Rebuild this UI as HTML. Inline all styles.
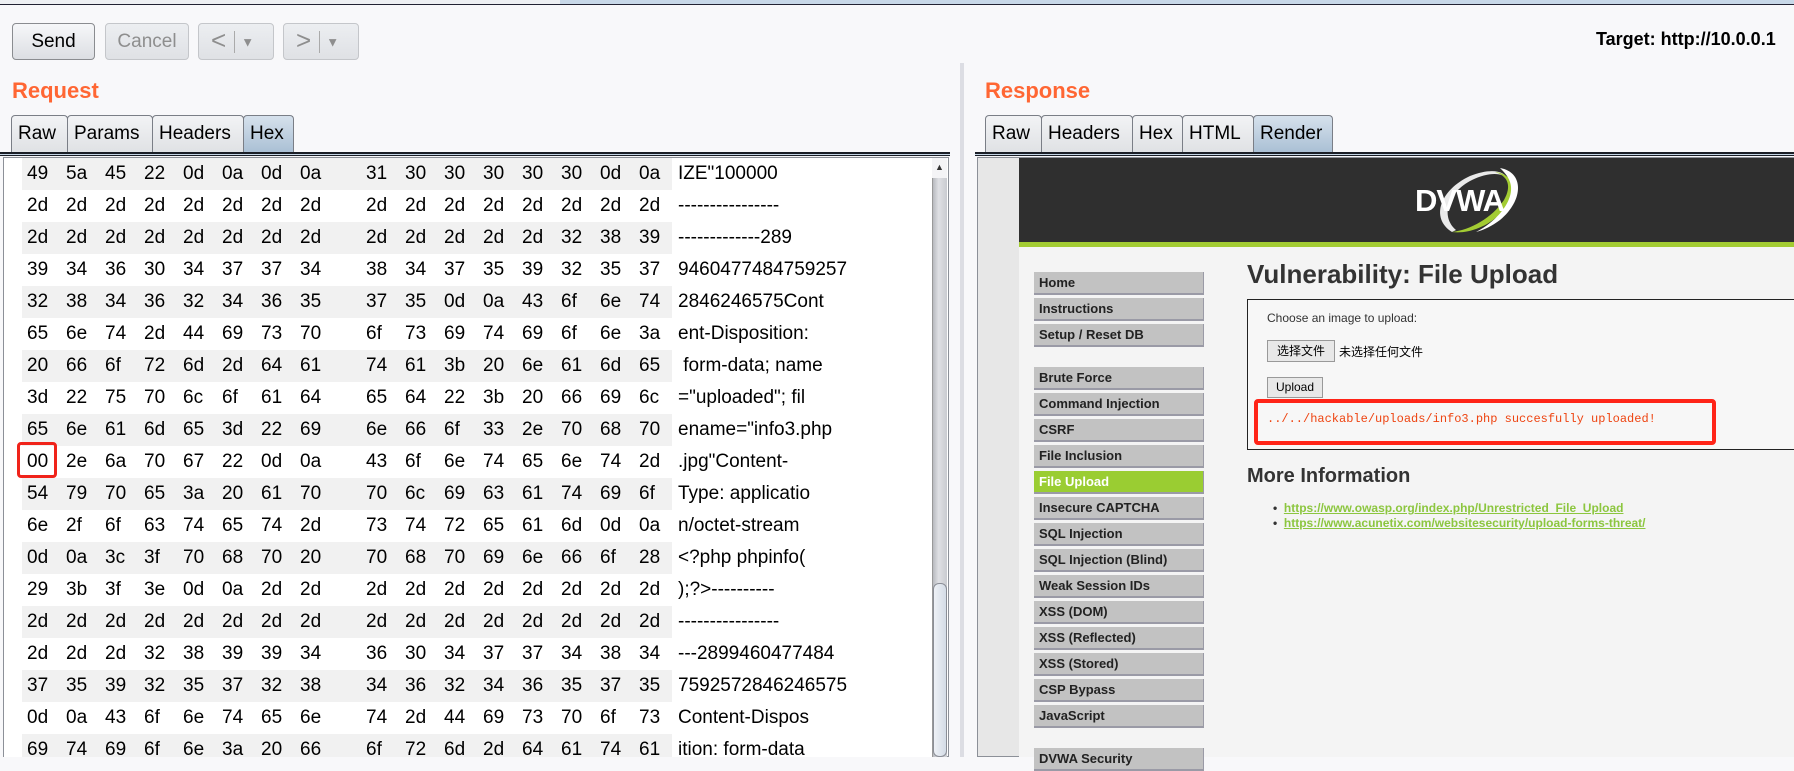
<!DOCTYPE html>
<html><head><meta charset="utf-8"><style>
*{box-sizing:border-box;margin:0;padding:0}
body{width:1794px;height:757px;overflow:hidden;background:#f8f8fa;font-family:"Liberation Sans",Arial,sans-serif;position:relative}
.a{position:absolute}
.btn{position:absolute;top:23px;height:37px;border:1px solid #8a8c90;border-radius:4px;background:linear-gradient(#f6f7f9,#dcdee3);font-size:19px;text-align:center;line-height:35px;color:#000}
.dis{border-color:#c4c6ca;color:#8e8e8e;background:linear-gradient(#eceef1,#dfe1e5)}
.title{position:absolute;top:78px;font-size:22px;font-weight:bold;color:#ff6633}
.tab{position:absolute;top:115px;height:38px;border:1px solid #7a7e86;border-bottom:none;border-radius:4px 4px 0 0;background:linear-gradient(#f2f3f5,#dfe1e4);font-size:19px;line-height:36px;padding-left:6px;color:#000}
.sel{background:linear-gradient(#d6e1ec,#a9bfd4)}
.tline{position:absolute;top:152px;height:4px;border-top:2px solid #1a1e26;border-bottom:1px solid #1a1e26;background:#c6d6e6}
.band{position:absolute;left:18px;width:650px;height:32px;background:#f1f1f1}
.grid{position:absolute;left:0;top:0;display:grid;grid-template-columns:23px repeat(8,39px) 27px repeat(8,39px) 260px;font-size:19px;line-height:32px}
.grid b{font-weight:normal;height:32px;white-space:pre}
.grid i{height:32px}
.m{position:absolute;left:1034px;width:170px;height:23px;background:#c2c2c2;border-bottom:2px solid #9a9aa6;border-right:1px solid #9a9aa6;font-size:13px;font-weight:bold;line-height:21px;padding-left:5px;color:#222}
</style></head><body>
<div class="a" style="left:0;top:0;width:1794px;height:5px;background:#c8d8e8;border-bottom:1px solid #223"></div>
<div class="a" style="left:0;top:0;width:560px;height:5px;border-bottom:1px solid #223;background:#eef0f3"></div>

<div class="btn" style="left:12px;width:83px">Send</div>
<div class="btn dis" style="left:105px;width:84px">Cancel</div>
<div class="btn dis" style="left:198px;width:76px;text-align:left;padding-left:12px;font-size:26px;line-height:33px">&lt;<span style="display:inline-block;width:1px;height:22px;background:#aaa;margin:0 6px 0 8px;vertical-align:middle"></span><span style="font-size:13px;vertical-align:middle">▼</span></div>
<div class="btn dis" style="left:283px;width:76px;text-align:left;padding-left:12px;font-size:26px;line-height:33px">&gt;<span style="display:inline-block;width:1px;height:22px;background:#aaa;margin:0 6px 0 8px;vertical-align:middle"></span><span style="font-size:13px;vertical-align:middle">▼</span></div>
<div class="a" style="left:1596px;top:29px;font-size:18px;font-weight:bold;white-space:nowrap">Target: http://10.0.0.1</div>

<div class="title" style="left:12px">Request</div>
<div class="tab" style="left:11px;width:57px">Raw</div>
<div class="tab" style="left:67px;width:86px">Params</div>
<div class="tab" style="left:152px;width:92px">Headers</div>
<div class="tab sel" style="left:243px;width:51px">Hex</div>
<div class="tline" style="left:0;width:950px"></div>
<div class="a" style="left:3px;top:157px;width:946px;height:600px;border:1px solid #8c9098;background:#fff"></div>

<div class="a" style="left:4px;top:158px;width:928px;height:599px;overflow:hidden;background:#fff;color:#000">
<div class="band" style="top:0"></div>
<div class="band" style="top:64px"></div>
<div class="band" style="top:128px"></div>
<div class="band" style="top:192px"></div>
<div class="band" style="top:256px"></div>
<div class="band" style="top:320px"></div>
<div class="band" style="top:384px"></div>
<div class="band" style="top:448px"></div>
<div class="band" style="top:512px"></div>
<div class="band" style="top:576px"></div>
<div class="grid"><i></i><b>49</b><b>5a</b><b>45</b><b>22</b><b>0d</b><b>0a</b><b>0d</b><b>0a</b><i></i><b>31</b><b>30</b><b>30</b><b>30</b><b>30</b><b>30</b><b>0d</b><b>0a</b><b>IZE"100000</b><i></i><b>2d</b><b>2d</b><b>2d</b><b>2d</b><b>2d</b><b>2d</b><b>2d</b><b>2d</b><i></i><b>2d</b><b>2d</b><b>2d</b><b>2d</b><b>2d</b><b>2d</b><b>2d</b><b>2d</b><b>----------------</b><i></i><b>2d</b><b>2d</b><b>2d</b><b>2d</b><b>2d</b><b>2d</b><b>2d</b><b>2d</b><i></i><b>2d</b><b>2d</b><b>2d</b><b>2d</b><b>2d</b><b>32</b><b>38</b><b>39</b><b>-------------289</b><i></i><b>39</b><b>34</b><b>36</b><b>30</b><b>34</b><b>37</b><b>37</b><b>34</b><i></i><b>38</b><b>34</b><b>37</b><b>35</b><b>39</b><b>32</b><b>35</b><b>37</b><b>9460477484759257</b><i></i><b>32</b><b>38</b><b>34</b><b>36</b><b>32</b><b>34</b><b>36</b><b>35</b><i></i><b>37</b><b>35</b><b>0d</b><b>0a</b><b>43</b><b>6f</b><b>6e</b><b>74</b><b>2846246575Cont</b><i></i><b>65</b><b>6e</b><b>74</b><b>2d</b><b>44</b><b>69</b><b>73</b><b>70</b><i></i><b>6f</b><b>73</b><b>69</b><b>74</b><b>69</b><b>6f</b><b>6e</b><b>3a</b><b>ent-Disposition:</b><i></i><b>20</b><b>66</b><b>6f</b><b>72</b><b>6d</b><b>2d</b><b>64</b><b>61</b><i></i><b>74</b><b>61</b><b>3b</b><b>20</b><b>6e</b><b>61</b><b>6d</b><b>65</b><b> form-data; name</b><i></i><b>3d</b><b>22</b><b>75</b><b>70</b><b>6c</b><b>6f</b><b>61</b><b>64</b><i></i><b>65</b><b>64</b><b>22</b><b>3b</b><b>20</b><b>66</b><b>69</b><b>6c</b><b>="uploaded"; fil</b><i></i><b>65</b><b>6e</b><b>61</b><b>6d</b><b>65</b><b>3d</b><b>22</b><b>69</b><i></i><b>6e</b><b>66</b><b>6f</b><b>33</b><b>2e</b><b>70</b><b>68</b><b>70</b><b>ename="info3.php</b><i></i><b>00</b><b>2e</b><b>6a</b><b>70</b><b>67</b><b>22</b><b>0d</b><b>0a</b><i></i><b>43</b><b>6f</b><b>6e</b><b>74</b><b>65</b><b>6e</b><b>74</b><b>2d</b><b>.jpg"Content-</b><i></i><b>54</b><b>79</b><b>70</b><b>65</b><b>3a</b><b>20</b><b>61</b><b>70</b><i></i><b>70</b><b>6c</b><b>69</b><b>63</b><b>61</b><b>74</b><b>69</b><b>6f</b><b>Type: applicatio</b><i></i><b>6e</b><b>2f</b><b>6f</b><b>63</b><b>74</b><b>65</b><b>74</b><b>2d</b><i></i><b>73</b><b>74</b><b>72</b><b>65</b><b>61</b><b>6d</b><b>0d</b><b>0a</b><b>n/octet-stream</b><i></i><b>0d</b><b>0a</b><b>3c</b><b>3f</b><b>70</b><b>68</b><b>70</b><b>20</b><i></i><b>70</b><b>68</b><b>70</b><b>69</b><b>6e</b><b>66</b><b>6f</b><b>28</b><b>&lt;?php phpinfo(</b><i></i><b>29</b><b>3b</b><b>3f</b><b>3e</b><b>0d</b><b>0a</b><b>2d</b><b>2d</b><i></i><b>2d</b><b>2d</b><b>2d</b><b>2d</b><b>2d</b><b>2d</b><b>2d</b><b>2d</b><b>);?&gt;----------</b><i></i><b>2d</b><b>2d</b><b>2d</b><b>2d</b><b>2d</b><b>2d</b><b>2d</b><b>2d</b><i></i><b>2d</b><b>2d</b><b>2d</b><b>2d</b><b>2d</b><b>2d</b><b>2d</b><b>2d</b><b>----------------</b><i></i><b>2d</b><b>2d</b><b>2d</b><b>32</b><b>38</b><b>39</b><b>39</b><b>34</b><i></i><b>36</b><b>30</b><b>34</b><b>37</b><b>37</b><b>34</b><b>38</b><b>34</b><b>---2899460477484</b><i></i><b>37</b><b>35</b><b>39</b><b>32</b><b>35</b><b>37</b><b>32</b><b>38</b><i></i><b>34</b><b>36</b><b>32</b><b>34</b><b>36</b><b>35</b><b>37</b><b>35</b><b>7592572846246575</b><i></i><b>0d</b><b>0a</b><b>43</b><b>6f</b><b>6e</b><b>74</b><b>65</b><b>6e</b><i></i><b>74</b><b>2d</b><b>44</b><b>69</b><b>73</b><b>70</b><b>6f</b><b>73</b><b>Content-Dispos</b><i></i><b>69</b><b>74</b><b>69</b><b>6f</b><b>6e</b><b>3a</b><b>20</b><b>66</b><i></i><b>6f</b><b>72</b><b>6d</b><b>2d</b><b>64</b><b>61</b><b>74</b><b>61</b><b>ition: form-data</b></div>
</div>

<div class="a" style="left:17px;top:442px;width:40px;height:36px;border:3px solid #f0231a;border-radius:4px"></div>

<div class="a" style="left:932px;top:158px;width:15px;height:599px;background:linear-gradient(90deg,#b8babf,#dfe0e4 40%,#c9cbd0);border-left:1px solid #999"></div>
<div class="a" style="left:932px;top:158px;width:15px;height:20px;background:#f4f4f6;font-size:9px;text-align:center;line-height:18px;color:#333">▲</div>
<div class="a" style="left:933px;top:583px;width:14px;height:174px;border:1px solid #8b8e96;border-radius:6px;background:linear-gradient(90deg,#eef1f6,#d4dce6)"></div>

<div class="a" style="left:960px;top:63px;width:4px;height:694px;background:#dcdde3"></div>

<div class="title" style="left:985px">Response</div>
<div class="tab" style="left:985px;width:57px">Raw</div>
<div class="tab" style="left:1041px;width:92px">Headers</div>
<div class="tab" style="left:1132px;width:51px">Hex</div>
<div class="tab" style="left:1182px;width:72px">HTML</div>
<div class="tab sel" style="left:1253px;width:80px">Render</div>
<div class="tline" style="left:975px;width:819px"></div>
<div class="a" style="left:977px;top:157px;width:817px;height:600px;border:1px solid #8c9098;background:#e7e7e7"></div>
<div class="a" style="left:1019px;top:158px;width:775px;height:599px;background:#f4f4f4"></div>
<div class="a" style="left:1019px;top:158px;width:775px;height:84px;background:#2f2f2f"></div>
<div class="a" style="left:1019px;top:242px;width:775px;height:5px;background:#a3cc33"></div>
<svg class="a" style="left:1400px;top:160px" width="130" height="80" viewBox="0 0 130 80">
<path d="M52 72 C30 58 40 30 70 16 C90 8 105 10 108 20 C104 12 88 12 72 20 C48 32 40 56 56 70 Z" fill="#fff" opacity="0.9"/>
<path d="M95 12 C115 14 120 34 100 54 C86 68 66 74 52 72 C70 70 92 58 104 40 C112 26 108 16 95 12 Z" fill="#a3cc33"/>
<path d="M100 8 C124 12 124 40 100 60 C92 66 84 70 76 72 C96 62 116 40 110 22 C108 16 104 12 100 8 Z" fill="#fff"/>
<text x="15" y="51" font-family="Liberation Sans" font-weight="bold" font-size="31" fill="#fff" letter-spacing="-1">DVWA</text>
</svg>

<div class="m" style="top:272px">Home</div>
<div class="m" style="top:298px">Instructions</div>
<div class="m" style="top:324px">Setup / Reset DB</div>
<div class="m" style="top:367px">Brute Force</div>
<div class="m" style="top:393px">Command Injection</div>
<div class="m" style="top:419px">CSRF</div>
<div class="m" style="top:445px">File Inclusion</div>
<div class="m" style="top:471px;background:#9acd32;color:#fff">File Upload</div>
<div class="m" style="top:497px">Insecure CAPTCHA</div>
<div class="m" style="top:523px">SQL Injection</div>
<div class="m" style="top:549px">SQL Injection (Blind)</div>
<div class="m" style="top:575px">Weak Session IDs</div>
<div class="m" style="top:601px">XSS (DOM)</div>
<div class="m" style="top:627px">XSS (Reflected)</div>
<div class="m" style="top:653px">XSS (Stored)</div>
<div class="m" style="top:679px">CSP Bypass</div>
<div class="m" style="top:705px">JavaScript</div>
<div class="m" style="top:748px">DVWA Security</div>

<div class="a" style="left:1247px;top:259px;font-size:26px;font-weight:bold;color:#333;white-space:nowrap">Vulnerability: File Upload</div>
<div class="a" style="left:1247px;top:299px;width:560px;height:151px;border:1px solid #222;background:#f7f7f7"></div>
<div class="a" style="left:1267px;top:311px;font-size:12px;color:#333">Choose an image to upload:</div>
<div class="a" style="left:1267px;top:340px;width:68px;height:22px;border:1px solid #999;background:#e8e8e8;font-size:12px;line-height:20px;text-align:center;font-family:'Liberation Sans','Noto Sans CJK SC',sans-serif">选择文件</div>
<div class="a" style="left:1339px;top:343px;font-size:12px;font-family:'Liberation Sans','Noto Sans CJK SC',sans-serif">未选择任何文件</div>
<div class="a" style="left:1267px;top:377px;width:56px;height:21px;border:1px solid #999;background:#e8e8e8;font-size:12px;line-height:19px;text-align:center">Upload</div>
<div class="a" style="left:1267px;top:412px;font-family:'Liberation Mono',monospace;font-size:12px;color:#e41;white-space:nowrap">../../hackable/uploads/info3.php succesfully uploaded!</div>
<div class="a" style="left:1254px;top:399px;width:462px;height:46px;border:4px solid #ff2418;border-radius:4px"></div>
<div class="a" style="left:1247px;top:465px;font-size:20px;font-weight:bold;color:#333">More Information</div>
<div class="a" style="left:1273px;top:501px;font-size:12px;font-weight:bold;line-height:15px;color:#333">
<div>•&nbsp;&nbsp;<span style="color:#8cc63f;text-decoration:underline">https://www.owasp.org/index.php/Unrestricted_File_Upload</span></div>
<div>•&nbsp;&nbsp;<span style="color:#8cc63f;text-decoration:underline">https://www.acunetix.com/websitesecurity/upload-forms-threat/</span></div>
</div>
</body></html>
